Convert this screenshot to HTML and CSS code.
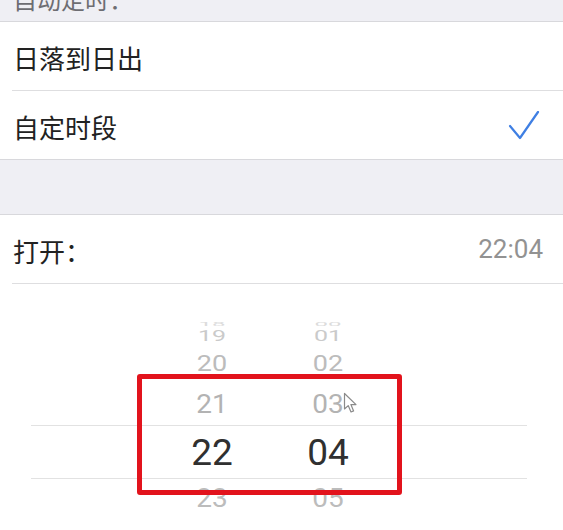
FILE: index.html
```html
<!DOCTYPE html>
<html lang="zh-CN">
<head>
<meta charset="utf-8">
<link rel="stylesheet" href="styles.css">
</head>
<body>
<div class="screen">
  <div class="group-header"><span class="group-title">自动定时：</span></div>
  <div class="list">
    <div class="row"><div class="row-inner sep"><span class="label">日落到日出</span></div></div>
    <div class="row"><div class="row-inner"><span class="label">自定时段</span>
      <svg class="check" width="32" height="30" viewBox="0 0 32 30"><polyline points="2,15 12,27 30,1" fill="none" stroke="#3f7fe3" stroke-width="2.2" stroke-linecap="round" stroke-linejoin="round"/></svg>
    </div></div>
  </div>
  <div class="gap"></div>
  <div class="list">
    <div class="row"><div class="row-inner sep"><span class="label">打开：</span><span class="value">22:04</span></div></div>
  </div>
  <div class="picker">
    <div class="wheel-row r18"><span class="cell">18</span><span class="cell">00</span></div>
    <div class="wheel-row r19"><span class="cell">19</span><span class="cell">01</span></div>
    <div class="wheel-row r20"><span class="cell">20</span><span class="cell">02</span></div>
    <div class="wheel-row r21"><span class="cell">21</span><span class="cell">03</span></div>
    <div class="wheel-row selected"><span class="cell">22</span><span class="cell">04</span></div>
    <div class="wheel-row r23"><span class="cell">23</span><span class="cell">05</span></div>
    <div class="highlight-box"></div>
    <svg class="cursor" width="16" height="22" viewBox="0 0 16 22"><path d="M1.5,1.5 L1.5,17 L5.2,13.6 L8,20 L10.6,18.9 L7.9,12.6 L13,12.6 Z" fill="#fff" stroke="#8a8a8a" stroke-width="1.2" stroke-linejoin="round"/></svg>
  </div>
</div>
</body>
</html>
```
FILE: styles.css
```css
html, body {
  margin: 0;
  padding: 0;
  background: #ffffff;
}
body {
  font-family: "Noto Sans CJK SC", "Noto Sans", sans-serif;
  width: 563px;
  height: 530px;
  overflow: hidden;
}
.screen {
  display: flex;
  flex-direction: column;
}
.group-header {
  height: 21px;
  background: #efeff4;
  border-bottom: 1px solid #d8d8dc;
  overflow: hidden;
  padding-left: 13px;
}
.group-title {
  display: block;
  font-size: 24px;
  line-height: 26px;
  margin-top: -14px;
  color: #6d6d72;
}
.list {
  background: #fff;
}
.row {
  padding-left: 12px;
}
.row-inner {
  height: 68px;
  display: flex;
  align-items: center;
  justify-content: space-between;
  padding-right: 20px;
}
.row-inner.sep {
  border-bottom: 1px solid #dedee0;
}
.label {
  font-size: 26px;
  color: #222;
  padding-left: 1px;
  padding-top: 2px;
}
.value {
  font-family: "Roboto", "Liberation Sans", sans-serif;
  font-size: 26px;
  color: #929292;
}
.check {
  margin-right: 3px;
  margin-top: 2px;
}
.gap {
  height: 54px;
  background: #efeff4;
  border-top: 1px solid #d8d8dc;
  border-bottom: 1px solid #d8d8dc;
}
.picker {
  position: relative;
  padding-top: 28px;
  display: flex;
  flex-direction: column;
  font-family: "Roboto", "Liberation Sans", sans-serif;
}
.wheel-row {
  display: grid;
  grid-template-columns: 116px 116px;
  justify-content: start;
  padding-left: 154px;
  align-items: center;
  overflow: visible;
}
.cell {
  text-align: center;
  line-height: 1;
}
.r18 { height: 12px; color: #dcdcdc; font-size: 24px; }
.r18 .cell { transform: scaleY(0.25); }
.r19 { height: 22px; color: #cacaca; font-size: 25px; }
.r19 .cell { transform: scaleY(0.55); }
.r20 { height: 37px; color: #bcbcbc; font-size: 27px; }
.r20 .cell { transform: scaleY(0.82); }
.r21 { height: 42px; color: #b3b3b3; font-size: 28px; }
.r21 .cell { transform: scaleY(0.95); }
.selected {
  height: 52px;
  margin: 0 36px 0 31px;
  padding-left: 123px;
  border-top: 1px solid #e2e2e2;
  border-bottom: 1px solid #e2e2e2;
  color: #303030;
  font-size: 37px;
}
.r23 { height: 40px; color: #bcbcbc; font-size: 28px; }
.r23 .cell { transform: scaleY(0.9); }
.highlight-box {
  position: absolute;
  left: 137px;
  top: 90px;
  width: 255px;
  height: 111px;
  border: 5px solid #e2131c;
  border-radius: 3px;
}
.cursor {
  position: absolute;
  left: 343px;
  top: 108px;
}
```
